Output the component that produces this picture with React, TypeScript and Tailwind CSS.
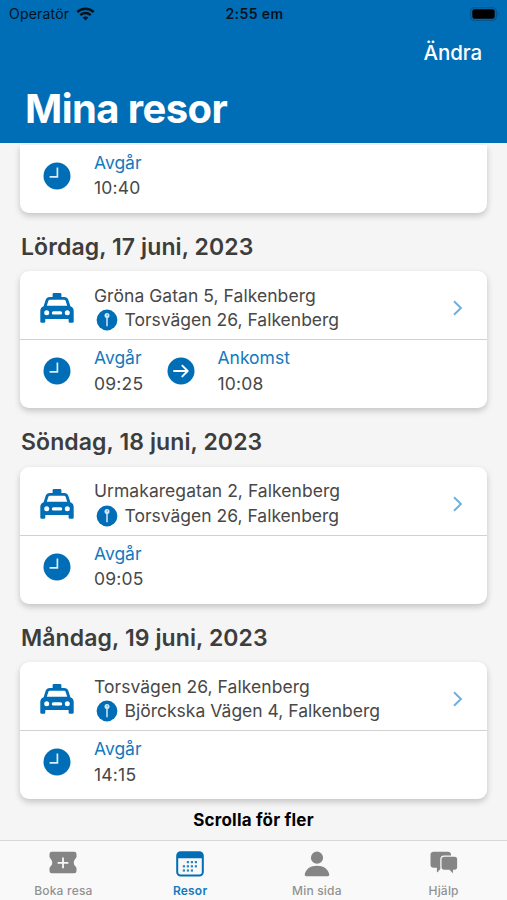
import type { ReactNode } from "react";

type Trip = {
  id: number;
  date: string;
  from: string;
  to: string;
  departure: string;
  arrival?: string;
};

const TRIPS: Trip[] = [
  {
    id: 1,
    date: "Lördag, 17 juni, 2023",
    from: "Gröna Gatan 5, Falkenberg",
    to: "Torsvägen 26, Falkenberg",
    departure: "09:25",
    arrival: "10:08",
  },
  {
    id: 2,
    date: "Söndag, 18 juni, 2023",
    from: "Urmakaregatan 2, Falkenberg",
    to: "Torsvägen 26, Falkenberg",
    departure: "09:05",
  },
  {
    id: 3,
    date: "Måndag, 19 juni, 2023",
    from: "Torsvägen 26, Falkenberg",
    to: "Björckska Vägen 4, Falkenberg",
    departure: "14:15",
  },
];

const WifiIcon = () => (
  <svg width="19" height="14" viewBox="0 0 19 14" fill="none" stroke="#04121d">
    <path d="M1.3 5C5.9.5 13.1.5 17.7 5" strokeWidth="2.5" />
    <path d="M4.3 8.1c2.9-2.8 7.5-2.8 10.4 0" strokeWidth="2.4" />
    <path d="M9.5 13.5 6.6 10.6c1.6-1.5 4.2-1.5 5.8 0z" fill="#04121d" stroke="none" />
  </svg>
);

const BatteryIcon = () => (
  <svg width="30" height="14" viewBox="0 0 30 14">
    <rect x="0.7" y="0.7" width="25.6" height="12.6" rx="3.8" fill="none" stroke="#04568c" strokeWidth="1.3" />
    <rect x="2.3" y="2.3" width="22.4" height="9.4" rx="2.2" fill="#000" />
    <path d="M27.6 5v4c1.5-.5 1.5-3.5 0-4z" fill="#04568c" />
  </svg>
);

const TaxiIcon = () => (
  <svg width="34" height="30" viewBox="0 0 34 30" fill="#006eb6">
    <path
      fillRule="evenodd"
      d="M12.6 4V1.3Q12.6 0 13.9 0h6.200q1.300 0 1.300 1.300V4h2.700q3.300 0 4.300 3l2 6.200q3.300 1.300 3.300 4.800v10.400q0 1.300-1.300 1.300h-2.500q-1.300 0-1.300-1.300V26H5.300v2.400q0 1.300-1.300 1.300H1.600Q.3 29.700.3 28.400V18q0-3.500 3.300-4.800l2-6.200q1-3 4.300-3zM9.900 6.800q-1.200 0-1.600 1.200l-1.500 4.700h20.400L25.700 8q-.4-1.200-1.600-1.200zM6.700 17.300a2.500 2.500 0 1 0 0 5 2.500 2.500 0 0 0 0-5zM27.300 17.300a2.500 2.500 0 1 0 0 5 2.500 2.500 0 0 0 0-5zM13.400 18.300a1.600 1.600 0 0 0 0 3.200h7.200a1.600 1.600 0 0 0 0-3.200z"
    />
  </svg>
);

const ClockIcon = () => (
  <svg width="28" height="28" viewBox="0 0 28 28" fill="none">
    <circle cx="14" cy="14" r="13.5" fill="#006eb6" />
    <path d="M14.4 5.5v9.3H6.6" stroke="#d9edfa" strokeWidth="1.7" />
  </svg>
);

const ArrowIcon = () => (
  <svg width="28" height="28" viewBox="0 0 28 28" fill="none">
    <circle cx="14" cy="14" r="13.5" fill="#006eb6" />
    <path
      d="M7 14h13.5M15.3 8.6l5.4 5.4-5.4 5.4"
      stroke="#fff"
      strokeWidth="1.9"
      strokeLinecap="round"
      strokeLinejoin="round"
    />
  </svg>
);

const PinIcon = () => (
  <svg width="22" height="22" viewBox="0 0 22 22" fill="none">
    <circle cx="11" cy="11" r="10.4" fill="#006eb6" />
    <path d="M11 7v10.2" stroke="#d3e8f6" strokeWidth="1.5" />
    <circle cx="11" cy="6.4" r="2.5" fill="#d3e8f6" />
    <circle cx="11.3" cy="6" r="0.7" fill="#4c9bd0" />
  </svg>
);

const ChevronIcon = () => (
  <svg width="12" height="18" viewBox="0 0 12 18" fill="none">
    <path d="M2 2.2 8.9 9 2 15.8" stroke="#6fb1de" strokeWidth="2" />
  </svg>
);

const TicketIcon = () => (
  <svg width="28" height="24" viewBox="0 0 28 24">
    <path
      d="M2.8.8h22.400q2.300 0 2.300 2.300v2.300q0 1.200-.9 2-1.900 1.700-1.900 4.100t1.900 4.100q.9.800.9 2v2.300q0 2.300-2.300 2.300H2.800Q.5 22.200.5 19.900v-2.300q0-1.200.9-2 1.900-1.700 1.900-4.100T1.400 7.400Q.5 6.600.5 5.400V3.100Q.5.800 2.800.8z"
      fill="#858585"
    />
    <path d="M14 6.4v10.8M8.600 11.800h10.800" stroke="#f8f8f8" strokeWidth="1.8" />
  </svg>
);

const CALENDAR_DOTS = [
  [11.3, 11], [15.3, 11], [19.3, 11],
  [7.3, 15.2], [11.3, 15.2], [15.3, 15.2], [19.3, 15.2],
  [7.3, 19.4], [11.3, 19.4], [15.3, 19.4],
];

const CalendarIcon = () => (
  <svg width="28" height="26" viewBox="0 0 28 26">
    <rect x="1.2" y="1.2" width="25.6" height="23.4" rx="3.5" fill="#f8f8f8" stroke="#006eb6" strokeWidth="2" />
    <path d="M1.2 7.3V4q0-2.800 2.800-2.800h20q2.800 0 2.800 2.800v3.300z" fill="#006eb6" />
    {CALENDAR_DOTS.map(([x, y]) => (
      <rect key={`${x}-${y}`} x={x - 0.5} y={y - 1} width="2.2" height="2.2" fill="#2d84c3" />
    ))}
  </svg>
);

const PersonIcon = () => (
  <svg width="26" height="26" viewBox="0 0 26 26" fill="#858585">
    <circle cx="13" cy="6.7" r="6.1" />
    <path d="M.7 23.800C1.500 17.900 6.600 14.700 13 14.700s11.500 3.200 12.300 9.100q0 1.400-1.500 1.400H2.200q-1.500 0-1.500-1.400z" />
  </svg>
);

const ChatIcon = () => (
  <svg width="28" height="24" viewBox="0 0 28 24" fill="#858585">
    <path d="M3.800.8h13.900q3.300 0 3.300 3.300v9.300q0 3.300-3.300 3.300h-6.400L7.800 21q-.9.500-.9-.4v-3.900H3.800Q.5 16.700.5 13.400V4.100Q.5.800 3.800.8z" />
    <path
      d="M14.200 5.100h10.300q3.300 0 3.300 3.300v7.700q0 3.300-3.300 3.300h-.9v3.100q0 1-.9.500l-3.500-3.600h-5q-3.300 0-3.300-3.300V8.400q0-3.300 3.300-3.300z"
      stroke="#f8f8f8"
      strokeWidth="1.3"
    />
  </svg>
);

const TABS = [
  { id: "book", label: "Boka resa", icon: <TicketIcon /> },
  { id: "trips", label: "Resor", icon: <CalendarIcon />, active: true },
  { id: "me", label: "Min sida", icon: <PersonIcon /> },
  { id: "help", label: "Hjälp", icon: <ChatIcon /> },
];

const TimeInfo = ({ icon, label, value }: { icon: ReactNode; label: string; value: string }) => (
  <div className="flex w-[123.5px] shrink-0">
    <div className="mt-[12px] w-[51px] shrink-0">{icon}</div>
    <div className="text-[17.5px] leading-[25.5px] whitespace-nowrap">
      <p className="text-[#1379bd]">{label}</p>
      <p className="tracking-[0.2px]">{value}</p>
    </div>
  </div>
);

const Times = ({ departure, arrival }: { departure: string; arrival?: string }) => (
  <div className="flex h-[68px] pt-[5px] pl-[23px]">
    <TimeInfo icon={<ClockIcon />} label="Avgår" value={departure} />
    {arrival && <TimeInfo icon={<ArrowIcon />} label="Ankomst" value={arrival} />}
  </div>
);

const TripCard = ({ trip }: { trip: Trip }) => (
  <section className="h-[195.5px] px-5">
    <h2 className="h-[58.5px] pt-[19px] pl-px text-[23px] leading-[30px] font-semibold tracking-[0.1px] whitespace-nowrap text-[#3d3d3d]">
      {trip.date}
    </h2>
    <div className="h-[137px] rounded-[9px] bg-white shadow-[0_3px_6px_rgba(0,0,0,0.2)]">
      <div className="flex h-[69px] border-b border-[#d2d2d2]">
        <div className="w-[74px] shrink-0 pt-[22px] pl-5">
          <TaxiIcon />
        </div>
        <div className="flex-1 pt-[12.5px] text-[17.5px] leading-[24.5px] whitespace-nowrap">
          <p className="tracking-[0.05px]">{trip.from}</p>
          <p className="flex items-center">
            <span className="ml-[2px] w-[28.5px]">
              <PinIcon />
            </span>
            {trip.to}
          </p>
        </div>
        <div className="w-[35px] pt-[28px]">
          <ChevronIcon />
        </div>
      </div>
      <Times departure={trip.departure} arrival={trip.arrival} />
    </div>
  </section>
);

const App = () => {
  return (
    <div className="flex h-[900px] w-[507px] flex-col overflow-hidden bg-[#f5f5f5] font-['Inter','Liberation_Sans',sans-serif] text-[#484848]">
      <header className="h-[142.5px] shrink-0 bg-[#006eb6] text-white">
        <div className="grid h-[27px] grid-cols-3 items-center pr-[7px] pl-[9px] text-[14px] text-[#04121d]">
          <div className="flex items-center gap-[7px]">
            <span className="tracking-[0.2px]">Operatör</span>
            <WifiIcon />
          </div>
          <span className="text-center font-semibold tracking-[0.4px]">2:55 em</span>
          <div className="flex justify-end">
            <BatteryIcon />
          </div>
        </div>
        <div className="pt-[11px] pr-[25px] text-right text-[20.5px] leading-[30px] font-medium tracking-[-0.1px]">
          Ändra
        </div>
        <h1 className="pt-[16px] pl-[25px] text-[40px] leading-[50px] font-bold tracking-[-0.6px]">Mina resor</h1>
      </header>

      <main className="flex-1 overflow-hidden pt-[2px]">
        <div className="mx-5 h-[68px] rounded-b-[9px] bg-white shadow-[0_3px_6px_rgba(0,0,0,0.2)]">
          <Times departure="10:40" />
        </div>
        {TRIPS.map((trip) => (
          <TripCard key={trip.id} trip={trip} />
        ))}
        <p className="pt-[10px] text-center text-[17px] leading-[22px] font-bold tracking-[0.2px] text-black">
          Scrolla för fler
        </p>
      </main>

      <nav className="grid h-[60px] shrink-0 grid-cols-4 border-t border-[#d8d8d8] bg-[#f9f9f9]">
        {TABS.map((tab) => (
          <div key={tab.id} className="flex flex-col items-center">
            <div className="h-[41px] pt-[10px]">{tab.icon}</div>
            <span
              className={
                tab.active
                  ? "text-[12px] leading-[18px] font-semibold tracking-[0.2px] text-[#1379bd]"
                  : "text-[12px] leading-[18px] font-medium tracking-[0.2px] text-[#929292]"
              }
            >
              {tab.label}
            </span>
          </div>
        ))}
      </nav>
    </div>
  );
};

export default App;
